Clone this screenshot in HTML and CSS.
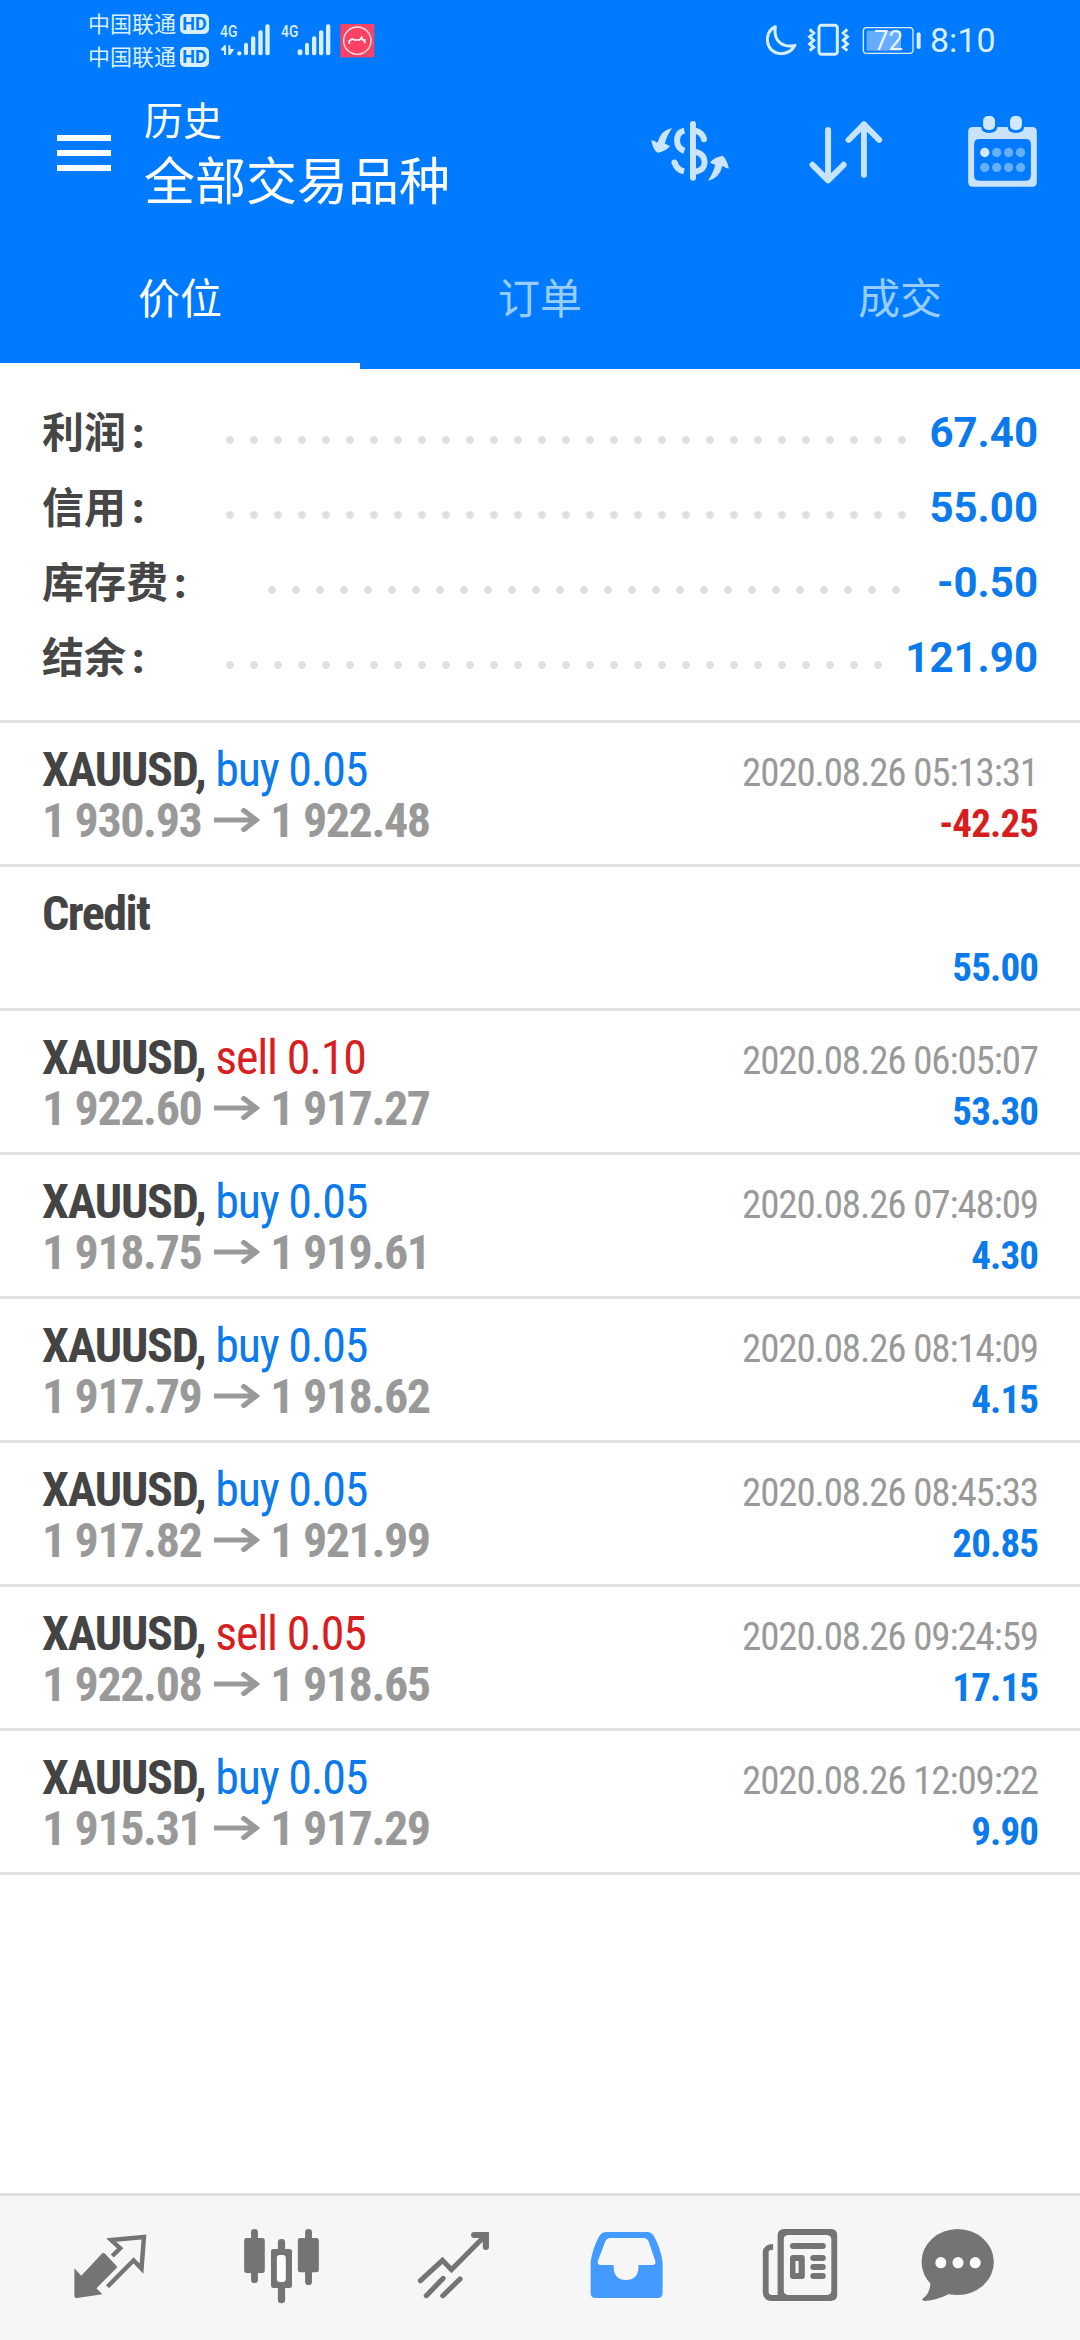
FILE: index.html
```html
<!DOCTYPE html>
<html lang="zh-CN">
<head>
<meta charset="utf-8">
<title>历史</title>
<link rel="stylesheet" href="styles.css">
</head>
<body>
<div class="screen">
  <header class="header">
    <div class="status">
      <div class="carriers">
        <div class="carrier">中国联通<span class="hd">HD</span></div>
        <div class="carrier">中国联通<span class="hd">HD</span></div>
      </div>
      <svg class="status-icons" viewBox="470 60 480 120" width="160" height="40">
        <g fill="#d9efff">
          <text class="net" x="479" y="112" textLength="52" lengthAdjust="spacingAndGlyphs">4G</text>
          <path d="M480 150l12-14h5v29h-6v-13zM504 136h6v11h12l-12 18h-6z"/>
          <circle cx="537" cy="160" r="6.5"/>
          <rect x="551" y="128" width="12" height="38" rx="6"/>
          <rect x="572" y="109" width="13" height="57" rx="6"/>
          <rect x="594" y="91" width="13" height="75" rx="6"/>
          <rect x="615" y="73" width="13" height="93" rx="6"/>
          <text class="net" x="662" y="112" textLength="52" lengthAdjust="spacingAndGlyphs">4G</text>
          <rect x="712" y="148" width="14" height="18" rx="6"/>
          <rect x="734" y="128" width="12" height="38" rx="6"/>
          <rect x="755" y="109" width="13" height="57" rx="6"/>
          <rect x="776" y="91" width="13" height="75" rx="6"/>
          <rect x="797" y="73" width="13" height="93" rx="6"/>
        </g>
        <rect x="840" y="72" width="102" height="100" fill="#fb4264"/>
        <circle cx="891" cy="122" r="41" fill="none" stroke="#ffe4ec" stroke-width="4"/>
        <path d="M867 132v-10l9-5 6 3h16l6-8 3 8h6v10" fill="none" stroke="#fff" stroke-width="5"/>
      </svg>
      <svg class="status-icons status-right" viewBox="70 60 480 120" width="160" height="40">
        <g fill="none" stroke="#d9efff">
          <path d="M104 80C66 96 74 161 122 161Q150 160 163 136C128 145 97 124 104 80Z" stroke-width="9" stroke-linejoin="round"/>
          <rect x="235" y="76" width="55" height="87" rx="8" stroke-width="9"/>
          <path d="M207 88l12 11-12 11 12 11-12 11 12 10-12 10M320 88l-12 11 12 11-12 11 12 11-12 10 12 10" stroke-width="9"/>
          <rect x="368" y="83" width="149" height="77" rx="10" stroke-width="4"/>
        </g>
        <rect x="378" y="92" width="103" height="60" fill="#66acff"/>
        <rect x="528" y="97" width="12" height="50" rx="6" fill="#d9efff"/>
        <text class="battery" x="400" y="149" textLength="87" lengthAdjust="spacingAndGlyphs">72</text>
      </svg>
      <div class="clock">8:10</div>
    </div>
    <div class="toolbar">
      <div class="menu"><i></i><i></i><i></i></div>
      <div class="titles">
        <div class="title">历史</div>
        <div class="subtitle">全部交易品种</div>
      </div>
      <svg class="tool currency" viewBox="150 105 240 220" width="80" height="73">
        <g fill="none" stroke="#cce5ff" stroke-width="18">
          <path d="M279 132V294" stroke-linecap="round"/>
          <path d="M253 152Q231 157 231 182Q231 205 253 213M252 275Q228 269 224 247M286 216Q314 222 314 249Q313 270 286 276M286 152Q308 158 312 178"/>
        </g>
        <g fill="#cce5ff">
          <circle cx="223" cy="248" r="9"/><circle cx="312" cy="178" r="9"/>
          <path d="M216 144C205 160 198 175 194 191L210 199Q195 215 172 219Q160 212 153 181Q161 180 172 189Q182 150 216 144Z"/>
          <path d="M324 303C335 287 342 272 346 256L330 248Q345 232 368 228Q380 235 387 266Q379 267 368 258Q358 297 324 303Z"/>
        </g>
      </svg>
      <svg class="tool sort" viewBox="624 105 225 220" width="75" height="73">
        <path d="M684 150V302M637 255L684 302L731 255M792 285V133M746 180L792 133L838 180" fill="none" stroke="#c6e4ff" stroke-width="18" stroke-linecap="round" stroke-linejoin="round"/>
      </svg>
      <svg class="tool calendar" viewBox="1101 105 213 220" width="71" height="73">
        <path fill="#c9e3ff" fill-rule="evenodd" d="M1118 141H1143Q1145 159 1167 159Q1190 159 1192 141H1223Q1225 159 1248 159Q1271 159 1273 141H1297Q1311 141 1311 155V306Q1311 321 1297 321H1118Q1104 321 1104 306V155Q1104 141 1118 141ZM1138 177Q1122 177 1122 193V287Q1122 303 1138 303H1277Q1293 303 1293 287V193Q1293 177 1277 177Z"/>
        <g fill="#d2e8ff"><rect x="1149" y="108" width="36" height="42" rx="15"/><rect x="1230" y="108" width="36" height="42" rx="15"/><circle cx="1154" cy="218" r="14"/></g>
        <g fill="#66afff"><circle cx="1190" cy="218" r="14"/><circle cx="1226" cy="218" r="14"/><circle cx="1262" cy="218" r="14"/><circle cx="1154" cy="263" r="14"/><circle cx="1190" cy="263" r="14"/><circle cx="1226" cy="263" r="14"/><circle cx="1262" cy="263" r="14"/></g>
      </svg>
    </div>
    <nav class="tabs">
      <div class="tab active">价位</div>
      <div class="tab">订单</div>
      <div class="tab">成交</div>
    </nav>
  </header>

  <section class="summary">
    <div class="sum-row"><span class="label">利润<b>:</b></span><span class="dots" style="--dots:29"></span><span class="sum-value">67.40</span></div>
    <div class="sum-row"><span class="label">信用<b>:</b></span><span class="dots" style="--dots:29"></span><span class="sum-value">55.00</span></div>
    <div class="sum-row"><span class="label">库存费<b>:</b></span><span class="dots" style="--dots:27"></span><span class="sum-value">-0.50</span></div>
    <div class="sum-row"><span class="label">结余<b>:</b></span><span class="dots" style="--dots:28"></span><span class="sum-value">121.90</span></div>
  </section>

  <main class="deals">
    <div class="deal">
      <div class="line"><div><span class="symbol">XAUUSD,</span> <span class="side buy">buy 0.05</span></div><span class="time">2020.08.26 05:13:31</span></div>
      <div class="line"><div class="prices">1 930.93<svg class="arrow" viewBox="0 0 46 24"><path d="M0 12H42M28 1L42 12L28 23"/></svg>1 922.48</div><span class="profit sell">-42.25</span></div>
    </div>
    <div class="deal balance">
      <div class="line"><span class="symbol">Credit</span></div>
      <div class="line"><span class="profit buy">55.00</span></div>
    </div>
    <div class="deal">
      <div class="line"><div><span class="symbol">XAUUSD,</span> <span class="side sell">sell 0.10</span></div><span class="time">2020.08.26 06:05:07</span></div>
      <div class="line"><div class="prices">1 922.60<svg class="arrow" viewBox="0 0 46 24"><path d="M0 12H42M28 1L42 12L28 23"/></svg>1 917.27</div><span class="profit buy">53.30</span></div>
    </div>
    <div class="deal">
      <div class="line"><div><span class="symbol">XAUUSD,</span> <span class="side buy">buy 0.05</span></div><span class="time">2020.08.26 07:48:09</span></div>
      <div class="line"><div class="prices">1 918.75<svg class="arrow" viewBox="0 0 46 24"><path d="M0 12H42M28 1L42 12L28 23"/></svg>1 919.61</div><span class="profit buy">4.30</span></div>
    </div>
    <div class="deal">
      <div class="line"><div><span class="symbol">XAUUSD,</span> <span class="side buy">buy 0.05</span></div><span class="time">2020.08.26 08:14:09</span></div>
      <div class="line"><div class="prices">1 917.79<svg class="arrow" viewBox="0 0 46 24"><path d="M0 12H42M28 1L42 12L28 23"/></svg>1 918.62</div><span class="profit buy">4.15</span></div>
    </div>
    <div class="deal">
      <div class="line"><div><span class="symbol">XAUUSD,</span> <span class="side buy">buy 0.05</span></div><span class="time">2020.08.26 08:45:33</span></div>
      <div class="line"><div class="prices">1 917.82<svg class="arrow" viewBox="0 0 46 24"><path d="M0 12H42M28 1L42 12L28 23"/></svg>1 921.99</div><span class="profit buy">20.85</span></div>
    </div>
    <div class="deal">
      <div class="line"><div><span class="symbol">XAUUSD,</span> <span class="side sell">sell 0.05</span></div><span class="time">2020.08.26 09:24:59</span></div>
      <div class="line"><div class="prices">1 922.08<svg class="arrow" viewBox="0 0 46 24"><path d="M0 12H42M28 1L42 12L28 23"/></svg>1 918.65</div><span class="profit buy">17.15</span></div>
    </div>
    <div class="deal">
      <div class="line"><div><span class="symbol">XAUUSD,</span> <span class="side buy">buy 0.05</span></div><span class="time">2020.08.26 12:09:22</span></div>
      <div class="line"><div class="prices">1 915.31<svg class="arrow" viewBox="0 0 46 24"><path d="M0 12H42M28 1L42 12L28 23"/></svg>1 917.29</div><span class="profit buy">9.90</span></div>
    </div>
  </main>

  <nav class="bottom">
    <svg viewBox="69.7 48 499.5 432" preserveAspectRatio="none">
      <path class="fill" d="M216 265L236 287L295 222Q300 217 305 221L338 257Q341 261 338 265L280 325L297 343L224 354Q216 355 216 349Z"/>
      <path d="M326 228L349 205L323 180L418 171L411 266L388 241L312 320" fill="none" stroke="#747474" stroke-width="13"/>
    </svg>
    <svg viewBox="569.2 48 499.5 432" preserveAspectRatio="none">
      <g class="fill">
        <rect x="729" y="147" width="20" height="162" rx="10"/><rect x="709" y="174" width="60" height="105" rx="7"/>
        <rect x="886" y="147" width="20" height="168" rx="10"/><rect x="865" y="174" width="61" height="103" rx="7"/>
        <rect x="807" y="177" width="21" height="193" rx="10"/><rect x="787" y="207" width="61" height="117" rx="7"/>
      </g>
      <rect x="804" y="225" width="26" height="81" rx="9" fill="#fff"/>
    </svg>
    <svg viewBox="1068.7 48 499.5 432" preserveAspectRatio="none">
      <g fill="none" stroke="#747474" stroke-width="15" stroke-linecap="round">
        <path d="M1221 302L1285 241L1311 269L1408 168M1238 347L1287 295M1286 347L1336 297"/>
        <path d="M1377 165H1411V201" stroke-width="18"/>
      </g>
    </svg>
    <svg viewBox="0 48 499.5 432" preserveAspectRatio="none">
      <path fill="#449bff" fill-rule="evenodd" d="M190 156H314Q324 157 332 170Q350 205 356 245V339Q356 354 342 354H161Q147 354 147 339V245Q153 205 171 170Q179 157 190 156ZM203 174Q194 175 190 183L168 243Q166 254 176 255H214V264Q216 300 250 300Q284 300 286 264V255H327Q337 254 335 243L315 183Q311 175 303 174Z"/>
    </svg>
    <svg viewBox="499.5 48 499.5 432" preserveAspectRatio="none">
      <path class="fill" fill-rule="evenodd" d="M708 147H846Q863 149 863 165V345Q863 361 846 363H672Q649 362 647 338V216Q649 193 677 192V209Q664 209 664 216V337Q665 345 674 345H690V165Q691 148 708 147ZM720 165Q708 166 708 178V333Q709 344 720 345H834Q846 344 846 333V178Q845 166 834 165Z"/>
      <g class="fill">
        <rect x="726" y="189" width="104" height="18" rx="9"/>
        <rect x="785" y="225" width="45" height="18" rx="9"/><rect x="785" y="252" width="45" height="18" rx="9"/><rect x="785" y="279" width="45" height="18" rx="9"/>
        <path fill-rule="evenodd" d="M733 225H762Q769 226 769 233V290Q768 297 762 297H733Q726 296 726 290V233Q727 226 733 225ZM742 243V279H751V243Z"/>
      </g>
    </svg>
    <svg viewBox="999 48 499.5 432" preserveAspectRatio="none">
      <g class="fill"><ellipse cx="1213" cy="246" rx="105" ry="99"/><path d="M1134 306Q1133 342 1111 356Q1106 363 1118 363Q1152 360 1190 341Z"/></g>
      <g fill="#fff"><ellipse cx="1164" cy="248" rx="16" ry="17"/><ellipse cx="1214" cy="248" rx="16" ry="17"/><ellipse cx="1264" cy="248" rx="16" ry="17"/></g>
    </svg>
  </nav>
</div>
</body>
</html>
```
FILE: styles.css
```css
* { box-sizing: border-box; }
body {
  margin: 0;
  background: #fff;
  font-family: Roboto, "Noto Sans CJK SC", sans-serif;
}
.screen {
  width: 1080px;
  height: 2340px;
  display: flex;
  flex-direction: column;
  overflow: hidden;
}
svg { display: block; flex: none; }

/* Header */
.header { background: #007aff; color: #fff; height: 369px; flex: none; }
.status {
  height: 80px;
  display: flex;
  align-items: flex-start;
  padding-left: 88px;
  color: #d9efff;
}
.carriers { width: 129px; padding-top: 7px; }
.carrier {
  display: flex;
  align-items: center;
  height: 33px;
  font: 22px/29px "Noto Sans CJK SC", sans-serif;
  padding-bottom: 2px;
}
.hd {
  width: 29px;
  height: 20px;
  margin: 2px 0 0 4px;
  border-radius: 5px;
  background: #d9efff;
  color: #007aff;
  font: bold 18px/20px Roboto, sans-serif;
  text-align: center;
}
.status-icons { margin-top: 20px; }
.status-right { margin-left: 387px; }
.net { font: 500 50px Roboto, sans-serif; }
.battery { font: 400 82px Roboto, sans-serif; fill: #e8f5ff; }
.clock { margin: 20px 0 0 6px; font-size: 34px; line-height: 40px; }

.toolbar { height: 148px; display: flex; align-items: flex-start; padding: 13px 42px 0 57px; }
.menu { width: 54px; margin-top: 42px; display: flex; flex-direction: column; gap: 9px; }
.menu i { height: 6px; background: #fff; }
.titles { flex: 1; padding-left: 33px; font-family: "Noto Sans CJK SC", sans-serif; }
.title { font-size: 39px; line-height: 50px; }
.subtitle { font-size: 51px; line-height: 70px; }
.tool { margin-top: 22px; }
.sort { margin-left: 78px; }
.calendar { margin-left: 84px; }

.tabs { display: flex; height: 141px; }
.tab {
  flex: 1;
  text-align: center;
  font: 42px/135px "Noto Sans CJK SC", sans-serif;
  color: #99cdff;
}
.tab.active { color: #fff; box-shadow: inset 0 -6px #fff; }

/* Account totals */
.summary { height: 351px; padding: 26px 42px 0; flex: none; }
.sum-row { height: 75px; display: flex; line-height: 75px; font-size: 42px; font-weight: bold; }
.label { color: #464646; margin-right: 50px; line-height: 70px; font-family: "Noto Sans CJK SC", sans-serif; }
.label b { display: inline-block; width: 42px; padding-left: 6px; font-family: Roboto, sans-serif; }
.dots {
  width: calc(24px * var(--dots));
  background: radial-gradient(circle at 12px 45px, #dfdfdf 3.5px, transparent 4.2px) 0 0 / 24px 75px repeat-x;
}
.sum-value { margin-left: auto; color: #0b7aec; }

/* Deals */
.deals { flex: 1; font-family: "Roboto Condensed", Roboto, sans-serif; font-stretch: 75%; }
.deal { height: 144px; border-top: 3px solid #e3e3e3; padding: 21px 42px 0; }
.deal:last-child { height: 147px; border-bottom: 3px solid #e3e3e3; }
.line { height: 51px; display: flex; justify-content: space-between; align-items: baseline; font-size: 48px; line-height: 51px; white-space: nowrap; letter-spacing: -1.2px; }
.balance .symbol { letter-spacing: -1.5px; }
.balance .line:last-child { justify-content: flex-end; padding-top: 4px; }
.symbol { font-weight: bold; color: #444; }
.buy { color: #0b7aec; }
.sell { color: #d81f1f; }
.time { font-size: 39px; color: #999; letter-spacing: -1.12px; }
.prices { font-weight: bold; color: #999; display: flex; letter-spacing: -1.4px; }
.arrow { width: 46px; height: 24px; margin: 13px 10px 0 13px; fill: none; stroke: #999; stroke-width: 5.2; }
.profit { font-size: 39px; font-weight: bold; letter-spacing: -0.9px; }

/* Bottom navigation */
.bottom { height: 147px; flex: none; display: flex; padding: 0 24px; background: #f6f6f6; border-top: 3px solid #e0e0e0; }
.bottom svg { width: 172px; height: 144px; }
.fill { fill: #747474; }
```
